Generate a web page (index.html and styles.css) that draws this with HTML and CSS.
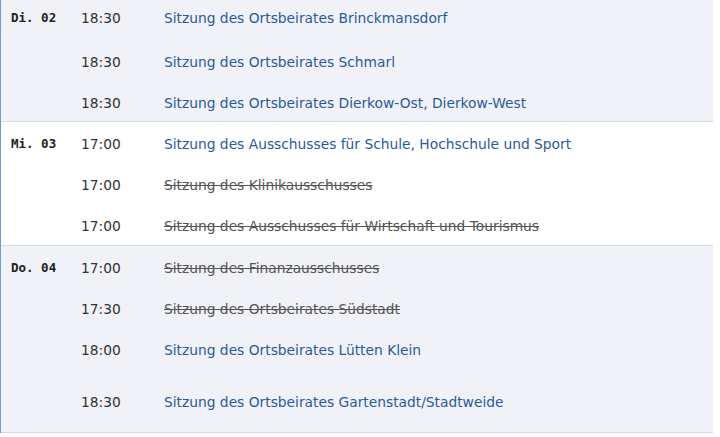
FILE: index.html
```html
<!DOCTYPE html>
<html lang="de">
<head>
<meta charset="utf-8">
<title>Sitzungskalender</title>
<link rel="stylesheet" href="styles.css">
</head>
<body>
<div class="calendar">
  <section class="day day-alt day-top">
    <div class="day-label">Di. 02</div>
    <ul class="events">
      <li class="event"><span class="time">18:30</span><a class="title" href="#">Sitzung des Ortsbeirates Brinckmansdorf</a></li>
      <li class="event"><span class="time">18:30</span><a class="title" href="#">Sitzung des Ortsbeirates Schmarl</a></li>
      <li class="event event-short"><span class="time">18:30</span><a class="title" href="#">Sitzung des Ortsbeirates Dierkow-Ost, Dierkow-West</a></li>
    </ul>
  </section>
  <section class="day">
    <div class="day-label">Mi. 03</div>
    <ul class="events">
      <li class="event"><span class="time">17:00</span><a class="title" href="#">Sitzung des Ausschusses für Schule, Hochschule und Sport</a></li>
      <li class="event"><span class="time">17:00</span><span class="title cancelled">Sitzung des Klinikausschusses</span></li>
      <li class="event"><span class="time">17:00</span><span class="title cancelled">Sitzung des Ausschusses für Wirtschaft und Tourismus</span></li>
    </ul>
  </section>
  <section class="day day-alt">
    <div class="day-label">Do. 04</div>
    <ul class="events">
      <li class="event"><span class="time">17:00</span><span class="title cancelled">Sitzung des Finanzausschusses</span></li>
      <li class="event"><span class="time">17:30</span><span class="title cancelled">Sitzung des Ortsbeirates Südstadt</span></li>
      <li class="event"><span class="time">18:00</span><a class="title" href="#">Sitzung des Ortsbeirates Lütten Klein</a></li>
      <li class="event event-tall"><span class="time">18:30</span><a class="title" href="#">Sitzung des Ortsbeirates Gartenstadt/Stadtweide</a></li>
    </ul>
  </section>
</div>
</body>
</html>
```

FILE: styles.css
```css
html, body {
  margin: 0;
  padding: 0;
  background: #ffffff;
}

body {
  font-family: "DejaVu Sans", Verdana, sans-serif;
  font-size: 13.8px;
  line-height: 18px;
  color: #333333;
}

.calendar {
  width: 712px;
  border-left: 1px solid #6b9bd8;
}

.day {
  display: flex;
  align-items: flex-start;
  border-bottom: 1px solid #cfdcee;
  background: #ffffff;
}

.day-alt {
  background: #f0f2f8;
}

.day-label {
  width: 69px;
  padding: 13px 0 0 10px;
  font-family: "DejaVu Sans Mono", "Liberation Mono", monospace;
  font-weight: bold;
  font-size: 12.5px;
  color: #222222;
}

.events {
  list-style: none;
  margin: 0;
  padding: 0;
  flex: 1;
}

.event {
  display: flex;
  box-sizing: border-box;
  height: 41px;
  padding-top: 13px;
}

.day-top .day-label {
  padding-top: 9px;
}

.day-top .event:first-child {
  height: 40px;
  padding-top: 9px;
}

.event-short {
  height: 40px;
}

.event-tall {
  height: 63px;
  padding-top: 24px;
}

.time {
  width: 83px;
  flex: none;
  padding-left: 1px;
  color: #333333;
}

.title {
  color: #2a5a9c;
  text-decoration: none;
}

.cancelled {
  color: #555555;
  text-decoration: line-through;
}
```
